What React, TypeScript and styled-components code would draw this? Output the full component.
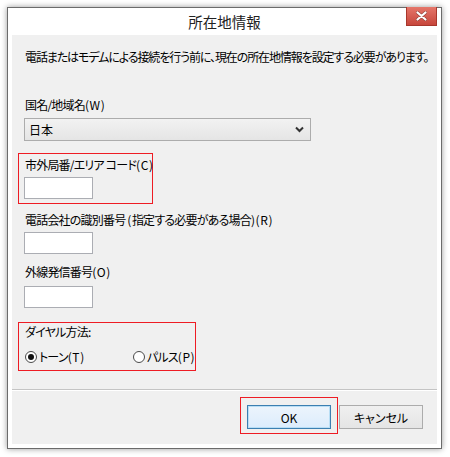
import React, { useState } from 'react';
import styled, { createGlobalStyle } from 'styled-components';

const ANNOTATION_RED = '#ee1c24';

const GlobalStyle = createGlobalStyle`
  html, body {
    margin: 0;
    padding: 0;
    background: #fff;
  }
  body {
    font-family: "Noto Sans CJK JP", "Noto Sans", sans-serif;
    font-feature-settings: 'palt';
    color: #000;
  }
`;

export default function App(): JSX.Element {
  const [dial, setDial] = useState<'tone' | 'pulse'>('tone');

  return (
    <>
      <GlobalStyle />
      <Page>
        <Window>
          <TitleBar>
            <span />
            <Title>所在地情報</Title>
            <CloseButton aria-label="close">
              <svg width="11" height="10" viewBox="0 0 11 10">
                <path d="M1.5 1.5 L9.5 8.5 M9.5 1.5 L1.5 8.5" stroke="#5a2a25" strokeWidth="3.4" strokeLinecap="round" opacity="0.55" />
                <path d="M1.5 1.5 L9.5 8.5 M9.5 1.5 L1.5 8.5" stroke="#fff" strokeWidth="2.2" strokeLinecap="round" />
              </svg>
            </CloseButton>
          </TitleBar>
          <Content>
            <Body>
              <Description>
                電話またはモデムによる接続を行う前に、現在の所在地情報を設定する必要があります。
              </Description>

              <Label $mt={32}>
                国名/地域名<Key>(W)</Key>
              </Label>
              <Select>
                <span>日本</span>
                <svg width="9" height="7" viewBox="0 0 9 7">
                  <path d="M1 1.5 L4.5 5 L8 1.5" stroke="#333" strokeWidth="2" fill="none" />
                </svg>
              </Select>

              <Highlight $mt={12} $width={135} $pt={3} $pb={4}>
                <Label $mt={0}>
                  市外局番/エリア コード<Key>(C)</Key>
                </Label>
                <TextBox />
              </Highlight>

              <Label $mt={8}>
                電話会社の識別番号 <Key>(</Key>指定する必要がある場合<Key>)(R)</Key>
              </Label>
              <TextBox />

              <Label $mt={10}>
                外線発信番号<Key>(O)</Key>
              </Label>
              <TextBox $mt={6} />

              <Highlight $mt={14} $width={178} $pt={1} $pb={5}>
                <Label $mt={0}>ダイヤル方法:</Label>
                <RadioRow>
                  <RadioOption onClick={() => setDial('tone')}>
                    <RadioCircle $checked={dial === 'tone'} />
                    <span>
                      トーン<Key>(T)</Key>
                    </span>
                  </RadioOption>
                  <RadioOption onClick={() => setDial('pulse')}>
                    <RadioCircle $checked={dial === 'pulse'} />
                    <span>
                      パルス<Key>(P)</Key>
                    </span>
                  </RadioOption>
                </RadioRow>
              </Highlight>
            </Body>

            <Footer>
              <ButtonHighlight>
                <Button $primary>OK</Button>
              </ButtonHighlight>
              <Button>キャンセル</Button>
            </Footer>
          </Content>
        </Window>
      </Page>
    </>
  );
}

// styles
const Page = styled.div`
  width: 450px;
  height: 457px;
  padding: 7px 0 0 7px;
  box-sizing: border-box;
`;

const Window = styled.div`
  width: 435px;
  height: 442px;
  box-sizing: border-box;
  border: 1px solid #6b6b6b;
  background: #fff;
  padding: 0 4px 4px 4px;
  display: flex;
  flex-direction: column;
  box-shadow: 0 0 6px rgba(0, 0, 0, 0.4);
`;

const TitleBar = styled.div`
  height: 27px;
  display: grid;
  grid-template-columns: 1fr auto 1fr;
  align-items: start;
`;

const Title = styled.div`
  font-size: 14.5px;
  line-height: 28px;
  color: #222;
`;

const CloseButton = styled.button`
  justify-self: end;
  width: 31px;
  height: 19px;
  margin-top: -1px;
  padding: 0;
  border: 1px solid #a8372c;
  border-top: none;
  background: linear-gradient(#e5766a, #c7463b);
  display: flex;
  align-items: center;
  justify-content: center;
`;

const Content = styled.div`
  flex: 1;
  background: #f0f0f0;
  display: flex;
  flex-direction: column;
`;

const Body = styled.div`
  padding: 14px 13px 0 13px;
  display: flex;
  flex-direction: column;
  align-items: flex-start;
  height: 355px;
  box-sizing: border-box;
  border-bottom: 1px solid #c4c4c4;
`;

const Description = styled.div`
  font-size: 12px;
  line-height: 16px;
  letter-spacing: -1.1px;
  white-space: nowrap;
`;

const Label = styled.div<{ $mt: number }>`
  margin-top: ${(p) => p.$mt}px;
  font-size: 12px;
  line-height: 16px;
  letter-spacing: -0.8px;
  white-space: nowrap;
`;

const Key = styled.span`
  letter-spacing: 0.6px;
`;

const Select = styled.div`
  margin-top: 5px;
  margin-left: -1px;
  width: 287px;
  height: 23px;
  box-sizing: border-box;
  border: 1px solid #acacac;
  background: linear-gradient(#f2f2f2, #e5e5e5);
  display: flex;
  align-items: center;
  justify-content: space-between;
  padding: 0 6px 0 4px;
  font-size: 12px;
`;

const TextBox = styled.div<{ $mt?: number }>`
  margin-top: ${(p) => p.$mt ?? 4}px;
  margin-left: -1px;
  width: 69px;
  height: 22px;
  box-sizing: border-box;
  border: 1px solid #abadb3;
  background: #fff;
`;

const Highlight = styled.div<{ $mt: number; $width: number; $pt: number; $pb: number }>`
  margin-top: ${(p) => p.$mt}px;
  margin-left: -7px;
  width: ${(p) => p.$width}px;
  box-sizing: border-box;
  border: 1px solid ${ANNOTATION_RED};
  padding: ${(p) => p.$pt}px 0 ${(p) => p.$pb}px 6px;
  display: flex;
  flex-direction: column;
  align-items: flex-start;
`;

const RadioRow = styled.div`
  margin-top: 9px;
  display: flex;
  gap: 48px;
`;

const RadioOption = styled.label`
  display: flex;
  align-items: center;
  gap: 2px;
  font-size: 12px;
  line-height: 16px;
  letter-spacing: -0.8px;
  white-space: nowrap;
  cursor: pointer;
`;

const RadioCircle = styled.span<{ $checked: boolean }>`
  width: 12px;
  height: 12px;
  flex: none;
  box-sizing: border-box;
  border-radius: 50%;
  border: 1px solid #4a4a4a;
  background: #fff;
  display: flex;
  align-items: center;
  justify-content: center;

  &::after {
    content: '';
    width: 6px;
    height: 6px;
    border-radius: 50%;
    background: ${(p) => (p.$checked ? '#111' : 'transparent')};
  }
`;

const Footer = styled.div`
  border-top: 1px solid #fff;
  display: flex;
  justify-content: flex-end;
  align-items: flex-start;
  gap: 1px;
  padding: 6px 14px 0 0;
`;

const ButtonHighlight = styled.div`
  display: flex;
  box-sizing: border-box;
  width: 98px;
  height: 37px;
  padding: 8px 0 0 7px;
  background: #f0f0f0;
  box-shadow: inset 0 0 0 1px ${ANNOTATION_RED};
`;

const Button = styled.button<{ $primary?: boolean }>`
  width: 84px;
  height: 24px;
  margin-top: ${(p) => (p.$primary ? 0 : 8)}px;
  box-sizing: border-box;
  border: 1px solid ${(p) => (p.$primary ? '#3c7fb1' : '#acacac')};
  box-shadow: ${(p) => (p.$primary ? 'inset 0 0 0 1px #b9def5' : 'none')};
  background: ${(p) =>
    p.$primary ? 'linear-gradient(#ecf4fc, #dcecfc)' : 'linear-gradient(#f0f0f0, #e5e5e5)'};
  font-family: inherit;
  font-feature-settings: 'palt';
  font-size: 12px;
  color: #000;
  padding: 0;
`;
